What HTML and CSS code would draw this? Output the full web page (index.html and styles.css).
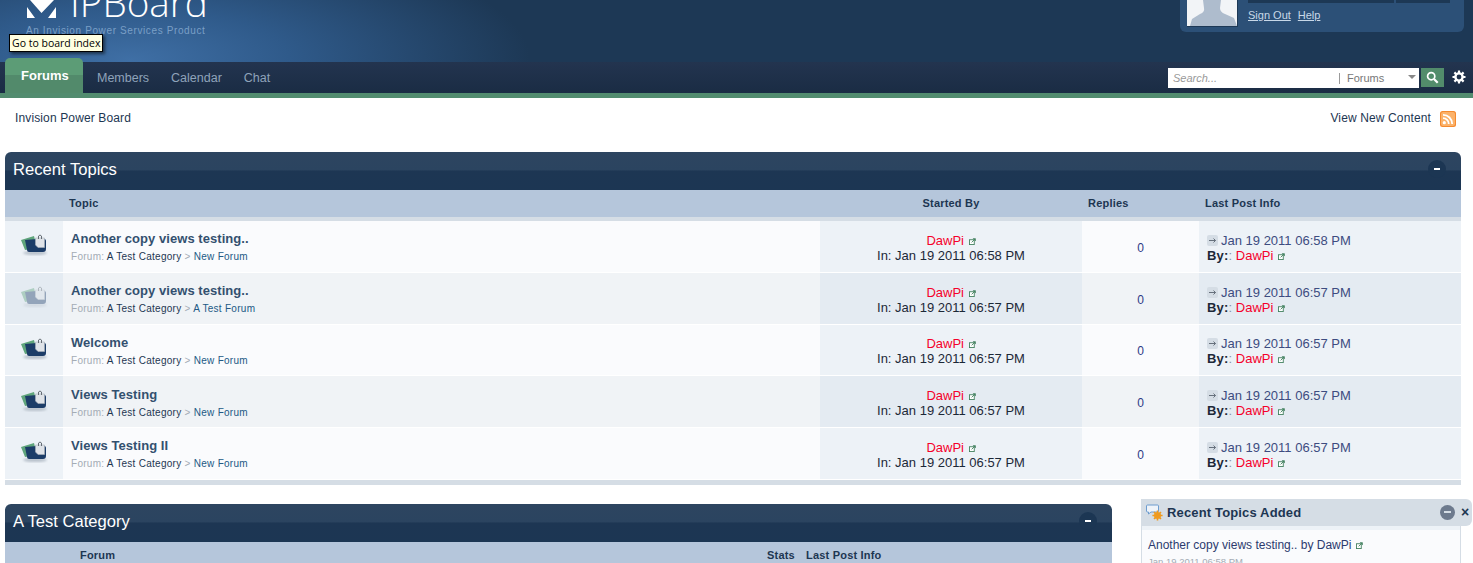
FILE: index.html
```html
<!DOCTYPE html>
<html lang="en">
<head>
<meta charset="utf-8">
<title>Invision Power Board</title>
<link rel="stylesheet" href="styles.css">
</head>
<body>
<svg class="defs" width="0" height="0" aria-hidden="true">
  <defs><filter id="soft"><feGaussianBlur stdDeviation=".35"/></filter><filter id="shade"><feGaussianBlur stdDeviation="1"/></filter></defs>
  <symbol id="topic" viewBox="0 0 28 24">
    <ellipse cx="15" cy="20" rx="12" ry="2" fill="#b9c2cc" filter="url(#shade)"/>
    <g filter="url(#soft)">
      <path d="M1 7 L14 3 L17 15 L5 17 Z" fill="#5fa57b"/>
      <path d="M5 7 L23 5.5 Q26 5.5 26 8 V16 Q26 19 23 19 L9 19 Q7 19 7 17 Z" fill="#1f3c68"/>
      <path d="M15.5 5 H24.5 V14.5 H18 L15.5 12 Z" fill="#dfe3e8" stroke="#aab2ba" stroke-width=".6"/>
      <path d="M18.5 6 V3 Q20 1 21.5 3 V6" fill="none" stroke="#666d75" stroke-width="1"/>
    </g>
  </symbol>
  <symbol id="pop" viewBox="0 0 8 8">
    <rect x=".5" y="2" width="5.5" height="5.5" fill="#fff" stroke="#3f7f5c"/>
    <path d="M3 5 L7 1 M4.5 .8 H7.3 V3.5" fill="none" stroke="#3f7f5c"/>
  </symbol>
  <symbol id="arr" viewBox="0 0 11 11">
    <rect width="11" height="11" rx="2" fill="#d5dde5"/>
    <path d="M2 5.5 H8.5 M6.5 3.5 L8.5 5.5 L6.5 7.5" fill="none" stroke="#66707c"/>
  </symbol>
</svg>

<header class="top">
  <div class="logo">
    <div class="logo-row">
      <svg class="logo-mark" viewBox="0 0 31 18" aria-hidden="true"><path d="M4 0 L15.5 13 L28 0 Z M1 7 L9 18 H1 Z M30 7 V18 H22 Z" fill="#fff"/></svg>
      <span class="logo-name">IPBoard</span>
    </div>
    <div class="logo-sub">An Invision Power Services Product</div>
  </div>
  <div class="user">
    <div class="avatar">
      <svg viewBox="0 0 50 26" width="50" height="26" aria-hidden="true"><path d="M16 0 H34 L33 8 Q33 12 38 14 L47 18 L50 26 H3 L5 19 L13 14 Q18 12 17 8 Z" fill="#aebccd"/></svg>
    </div>
    <div class="user-side">
      <div class="user-bars"><span class="bar-a"></span><span class="bar-b"></span></div>
      <div class="user-links"><a>Sign Out</a><a>Help</a></div>
    </div>
  </div>
  <div class="tip">Go to board index</div>
</header>

<nav class="nav">
  <a class="tab active">Forums</a>
  <a class="tab">Members</a>
  <a class="tab">Calendar</a>
  <a class="tab">Chat</a>
  <div class="search">
    <div class="search-box">
      <span class="search-input">Search...</span>
      <span class="search-scope">Forums</span>
      <span class="caret"></span>
    </div>
    <div class="search-btn">
      <svg viewBox="0 0 13 13" width="13" height="13" aria-hidden="true"><circle cx="5.2" cy="5.2" r="3.6" fill="none" stroke="#fff" stroke-width="1.7"/><path d="M8 8 L11.7 11.7" stroke="#fff" stroke-width="2.2"/></svg>
    </div>
    <svg class="gear" viewBox="0 0 14 14" width="14" height="14" aria-hidden="true"><circle cx="7" cy="7" r="3.6" fill="none" stroke="#fff" stroke-width="2.4"/><path d="M7 .5 V3 M7 11 V13.5 M.5 7 H3 M11 7 H13.5 M2.4 2.4 L4.2 4.2 M9.8 9.8 L11.6 11.6 M2.4 11.6 L4.2 9.8 M9.8 4.2 L11.6 2.4" stroke="#fff" stroke-width="2.2"/></svg>
  </div>
</nav>
<div class="nav-line"></div>

<main class="page">
  <div class="crumbs">
    <span>Invision Power Board</span>
    <span class="new">View New Content
      <svg class="rss" viewBox="0 0 16 16" width="16" height="16" aria-hidden="true"><rect width="16" height="16" rx="2.5" fill="#f58a2e"/><rect x="1" y="1" width="14" height="14" rx="2" fill="#fbb26a"/><circle cx="4.3" cy="11.7" r="1.6" fill="#fff"/><path d="M3 7.2 A5.8 5.8 0 0 1 8.8 13 M3 3.8 A9.2 9.2 0 0 1 12.2 13" fill="none" stroke="#fff" stroke-width="1.8"/></svg>
    </span>
  </div>

  <section class="block">
    <h2 class="block-title">Recent Topics<span class="toggle"></span></h2>
    <div class="row head">
      <span></span><span class="h-topic">Topic</span><span class="center">Started By</span><span>Replies</span><span>Last Post Info</span>
    </div>
    <div class="head-gap"></div>

    <div class="row item">
      <div class="c-icon"><svg class="t-icon" aria-hidden="true"><use href="#topic"/></svg></div>
      <div class="c-main"><a class="title">Another copy views testing..</a><div class="sub">Forum: <a>A Test Category</a> &gt; <a class="blue">New Forum</a></div></div>
      <div class="c-start"><div><a class="red">DawPi</a> <svg class="pop"><use href="#pop"/></svg></div><div>In: Jan 19 2011 06:58 PM</div></div>
      <div class="c-rep">0</div>
      <div class="c-last"><div class="when"><svg class="arr"><use href="#arr"/></svg>Jan 19 2011 06:58 PM</div><div><b class="by">By:</b><span class="faint">:</span> <a class="red">DawPi</a> <svg class="pop"><use href="#pop"/></svg></div></div>
    </div>

    <div class="row item read">
      <div class="c-icon"><svg class="t-icon dim" aria-hidden="true"><use href="#topic"/></svg></div>
      <div class="c-main"><a class="title">Another copy views testing..</a><div class="sub">Forum: <a>A Test Category</a> &gt; <a class="blue">A Test Forum</a></div></div>
      <div class="c-start"><div><a class="red">DawPi</a> <svg class="pop"><use href="#pop"/></svg></div><div>In: Jan 19 2011 06:57 PM</div></div>
      <div class="c-rep">0</div>
      <div class="c-last"><div class="when"><svg class="arr"><use href="#arr"/></svg>Jan 19 2011 06:57 PM</div><div><b class="by">By:</b><span class="faint">:</span> <a class="red">DawPi</a> <svg class="pop"><use href="#pop"/></svg></div></div>
    </div>

    <div class="row item">
      <div class="c-icon"><svg class="t-icon" aria-hidden="true"><use href="#topic"/></svg></div>
      <div class="c-main"><a class="title">Welcome</a><div class="sub">Forum: <a>A Test Category</a> &gt; <a class="blue">New Forum</a></div></div>
      <div class="c-start"><div><a class="red">DawPi</a> <svg class="pop"><use href="#pop"/></svg></div><div>In: Jan 19 2011 06:57 PM</div></div>
      <div class="c-rep">0</div>
      <div class="c-last"><div class="when"><svg class="arr"><use href="#arr"/></svg>Jan 19 2011 06:57 PM</div><div><b class="by">By:</b><span class="faint">:</span> <a class="red">DawPi</a> <svg class="pop"><use href="#pop"/></svg></div></div>
    </div>

    <div class="row item alt">
      <div class="c-icon"><svg class="t-icon" aria-hidden="true"><use href="#topic"/></svg></div>
      <div class="c-main"><a class="title">Views Testing</a><div class="sub">Forum: <a>A Test Category</a> &gt; <a class="blue">New Forum</a></div></div>
      <div class="c-start"><div><a class="red">DawPi</a> <svg class="pop"><use href="#pop"/></svg></div><div>In: Jan 19 2011 06:57 PM</div></div>
      <div class="c-rep">0</div>
      <div class="c-last"><div class="when"><svg class="arr"><use href="#arr"/></svg>Jan 19 2011 06:57 PM</div><div><b class="by">By:</b><span class="faint">:</span> <a class="red">DawPi</a> <svg class="pop"><use href="#pop"/></svg></div></div>
    </div>

    <div class="row item">
      <div class="c-icon"><svg class="t-icon" aria-hidden="true"><use href="#topic"/></svg></div>
      <div class="c-main"><a class="title">Views Testing II</a><div class="sub">Forum: <a>A Test Category</a> &gt; <a class="blue">New Forum</a></div></div>
      <div class="c-start"><div><a class="red">DawPi</a> <svg class="pop"><use href="#pop"/></svg></div><div>In: Jan 19 2011 06:57 PM</div></div>
      <div class="c-rep">0</div>
      <div class="c-last"><div class="when"><svg class="arr"><use href="#arr"/></svg>Jan 19 2011 06:57 PM</div><div><b class="by">By:</b><span class="faint">:</span> <a class="red">DawPi</a> <svg class="pop"><use href="#pop"/></svg></div></div>
    </div>
    <div class="block-end"></div>
  </section>

  <div class="lower">
    <section class="block cat">
      <h2 class="block-title">A Test Category<span class="toggle"></span></h2>
      <div class="cat-head"><span class="h-forum">Forum</span><span class="h-stats">Stats</span><span>Last Post Info</span></div>
    </section>
    <aside class="side">
      <div class="side-head">
        <svg class="side-icon" viewBox="0 0 17 17" width="17" height="17" aria-hidden="true"><path d="M1.5 1 H11.5 Q12.5 1 12.5 2 V7 Q12.5 8 11.5 8 H5 L2.5 10 V8 H1.5 Q.5 8 .5 7 V2 Q.5 1 1.5 1 Z" fill="#eef3f9" stroke="#6d9ccf"/><circle cx="11.5" cy="11.5" r="3.6" fill="#f0a22c"/><path d="M11.5 6.4 V16.6 M6.4 11.5 H16.6 M8 8 L15 15 M8 15 L15 8" stroke="#ef9a1f" stroke-width="1.6"/></svg>
        <span class="side-title">Recent Topics Added</span>
        <span class="side-min"></span>
        <span class="side-close">×</span>
      </div>
      <div class="side-body">
        <div class="side-link">Another copy views testing.. by DawPi <svg class="pop"><use href="#pop"/></svg></div>
        <div class="side-date">Jan 19 2011 06:58 PM</div>
      </div>
    </aside>
  </div>
</main>
</body>
</html>
```

FILE: styles.css
```css
html { overflow: hidden; }
html, body { height: 563px; }
body {
  margin: 0;
  overflow: hidden;
  background: #fff;
  font-family: "Liberation Sans", Arial, sans-serif;
  color: #1c2837;
}
.defs { position: absolute; }

.top {
  position: relative;
  height: 62px;
  overflow: hidden;
  display: flex;
  justify-content: space-between;
  background:
    radial-gradient(ellipse 400px 130px at 130px 60px, #3f6fa5 0%, #2f5a8a 40%, rgba(29,56,86,0) 100%),
    #1d3855;
}
.logo { margin: -22px 0 0 26px; }
.logo-row { display: flex; align-items: flex-end; height: 48px; }
.logo-mark { width: 31px; height: 18px; margin-bottom: 8px; }
.logo-name {
  margin-left: 13px;
  font-family: "Open Sans", sans-serif;
  font-weight: 300;
  font-size: 38.7px;
  line-height: 48px;
  color: #fff;
}
.logo-sub {
  margin-top: -1px;
  font-size: 10px;
  line-height: 12px;
  letter-spacing: .62px;
  color: #7a9fc6;
}
.user {
  display: flex;
  align-self: flex-start;
  width: 284px;
  height: 32px;
  margin-right: 9px;
  padding: 0 7px;
  box-sizing: border-box;
  gap: 10px;
  background: #2c5077;
  border-radius: 0 0 6px 6px;
}
.avatar {
  width: 50px;
  height: 26px;
  background: #f2f4f7;
  border-right: 1px solid #1d3855;
  border-bottom: 1px solid #1d3855;
  flex: none;
}
.avatar svg { display: block; }
.user-bars { display: flex; gap: 2px; height: 3px; }
.bar-a { width: 146px; background: #1d3855; }
.bar-b { width: 54px; background: #1d3855; }
.user-links { display: flex; gap: 7px; margin-top: 6px; font-size: 11px; line-height: 13px; }
.user-links a { color: #c8d8e8; text-decoration: underline; }
.tip {
  position: absolute;
  left: 9px;
  top: 34px;
  width: 94px;
  height: 18px;
  box-sizing: border-box;
  padding-left: 2px;
  border: 1px solid #000;
  background: #ffffe1;
  box-shadow: 2px 2px 3px rgba(0,0,0,.5);
  color: #000;
  font-family: "Open Sans", "Liberation Sans", sans-serif;
  font-size: 10.5px;
  line-height: 16px;
  white-space: nowrap;
}

.nav {
  display: flex;
  align-items: flex-end;
  height: 31px;
  padding-left: 5px;
  background: linear-gradient(#23344f, #1a2c44);
}
.tab {
  margin-left: 14px;
  margin-right: 8px;
  font-size: 12.5px;
  line-height: 30px;
  color: #8fa3ba;
}
.tab.active {
  position: relative;
  z-index: 1;
  width: 78px;
  height: 35px;
  margin: 0;
  box-sizing: border-box;
  padding: 0 0 0 16px;
  border-radius: 5px 5px 0 0;
  background: linear-gradient(#5c9c76 0, #5c9c76 50%, #528a6b 50%, #528a6b 100%);
  color: #fff;
  font-weight: bold;
  font-size: 13px;
  line-height: 36px;
}
.search { display: flex; align-items: flex-start; margin-left: auto; height: 31px; padding-top: 6px; box-sizing: border-box; }
.search-box {
  position: relative;
  display: flex;
  align-items: center;
  width: 251px;
  height: 20px;
  background: #fff;
  font-size: 11px;
  color: #777;
}
.search-input { width: 166px; padding-left: 5px; font-style: italic; color: #999; }
.search-scope { padding-left: 7px; border-left: 1px solid #9a9a9a; line-height: 11px; }
.caret {
  position: absolute;
  right: 3px;
  top: 7px;
  border: 4px solid transparent;
  border-top-color: #888;
  border-bottom-width: 0;
}
.search-btn {
  display: flex;
  align-items: center;
  justify-content: center;
  width: 23px;
  height: 19px;
  margin-left: 2px;
  background: #528c6b;
}
.gear { margin: 2px 7px 0 8px; }
.nav-line { height: 5px; background: #528c6f; }

.page { padding: 0 12px 0 5px; }
.crumbs {
  display: flex;
  justify-content: space-between;
  align-items: flex-start;
  height: 54px;
  padding: 13px 5px 0 10px;
  box-sizing: border-box;
  font-size: 12px;
  line-height: 14px;
  letter-spacing: .13px;
  color: #1d3652;
}
.new { display: flex; align-items: flex-start; gap: 9px; }
.rss { margin-top: 0; }

.block-title {
  position: relative;
  height: 38px;
  margin: 0;
  padding-left: 8px;
  border-radius: 6px 6px 0 0;
  background: linear-gradient(#2d4560 0, #2b4460 47%, #1d3653 50%, #1c3653 100%);
  color: #fff;
  font-weight: normal;
  font-size: 16.6px;
  line-height: 35px;
}
.toggle {
  position: absolute;
  right: 15px;
  top: 8px;
  width: 18px;
  height: 18px;
  border-radius: 50%;
  background: #1c3653;
}
.toggle::after {
  content: "";
  position: absolute;
  left: 6px;
  top: 8px;
  width: 6px;
  height: 2px;
  background: #fff;
}
.row {
  display: grid;
  grid-template-columns: 58px 757px 262px 117px 262px;
}
.head {
  height: 27px;
  box-sizing: border-box;
  padding-bottom: 2px;
  align-items: center;
  background: #b5c6db;
  font-size: 11px;
  font-weight: bold;
  color: #1d3652;
}
.head span { padding-left: 6px; letter-spacing: .2px; }
.head .center { padding-left: 0; text-align: center; }
.head-gap { height: 4px; background: #d5dde5; }
.item {
  height: 51.75px;
  box-sizing: border-box;
  border-bottom: 1px solid #fff;
}
.item > div { display: flex; flex-direction: column; justify-content: center; }
.c-icon { background: #edf2f7; align-items: center; }
.c-main { background: #fafbfd; padding: 1px 0 0 8px; }
.c-start { background: #edf2f7; align-items: center; font-size: 13px; line-height: 15px; text-align: center; padding-top: 3px; }
.c-rep { background: #fafbfd; align-items: center; font-size: 12px; color: #2c3a86; padding-top: 3px; }
.c-last { background: #edf2f7; padding: 3px 0 0 8px; font-size: 13px; line-height: 15px; }
.read .c-icon, .read .c-start, .read .c-last, .alt .c-icon, .alt .c-start, .alt .c-last { background: #e4ebf2; }
.read .c-main, .read .c-rep, .alt .c-main, .alt .c-rep { background: #f0f3f6; }
.t-icon { width: 28px; height: 24px; margin-top: -2px; }
.t-icon.dim { opacity: .4; }
.title {
  font-size: 13px;
  font-weight: bold;
  line-height: 18px;
  letter-spacing: .05px;
  color: #33506f;
}
.sub { margin-top: 2px; font-size: 10px; line-height: 13px; letter-spacing: .28px; color: #a4acb5; }
.sub a { color: #1d3652; }
.sub a.blue { color: #225985; }
.red { color: #f5002b; }
.pop { width: 7px; height: 7px; margin-left: 1px; }
.when { color: #3d4c80; }
.arr { width: 11px; height: 11px; margin-right: 3px; vertical-align: -1px; }
.by { letter-spacing: .2px; }
.faint { color: #8a929c; }
.block-end { height: 5px; background: #d5dde5; }

.lower { display: flex; justify-content: space-between; margin-top: 19px; }
.cat { width: 1107px; }
.cat-head {
  display: flex;
  height: 27px;
  align-items: center;
  background: #b5c6db;
  font-size: 11px;
  font-weight: bold;
  letter-spacing: .2px;
  color: #1d3652;
}
.h-forum { margin-left: 75px; width: 687px; }
.h-stats { width: 39px; }

.side { width: 320px; margin-top: -5px; }
.side-head {
  display: flex;
  align-items: center;
  height: 27px;
  margin-right: -11px;
  padding-left: 5px;
  padding-top: 1px;
  box-sizing: border-box;
  background: #d5dde5;
  border-radius: 0 6px 6px 0;
}
.side-icon { flex: none; }
.side-title { margin-left: 4px; font-size: 13px; font-weight: bold; letter-spacing: .15px; color: #1d3652; }
.side-min {
  position: relative;
  margin-left: auto;
  width: 15px;
  height: 15px;
  border-radius: 50%;
  background: #6d7a8d;
}
.side-min::after {
  content: "";
  position: absolute;
  left: 4px;
  top: 6px;
  width: 7px;
  height: 2px;
  background: #d5dde5;
}
.side-close { margin: 0 1px 0 6px; width: 10px; font-size: 14px; font-weight: bold; line-height: 15px; color: #1d3652; }
.side-body {
  height: 60px;
  padding: 5px 7px 0 6px;
  border: 1px solid #d5dde5;
  border-top: 0;
  background: linear-gradient(#edf2f7 0, #edf2f7 4px, #fafbfd 4px);
}
.side-link { margin-top: 7px; font-size: 12px; line-height: 15px; color: #2c3a6e; }
.side-date { margin-top: 3px; font-size: 9.5px; line-height: 12px; color: #a4acb5; }
```
